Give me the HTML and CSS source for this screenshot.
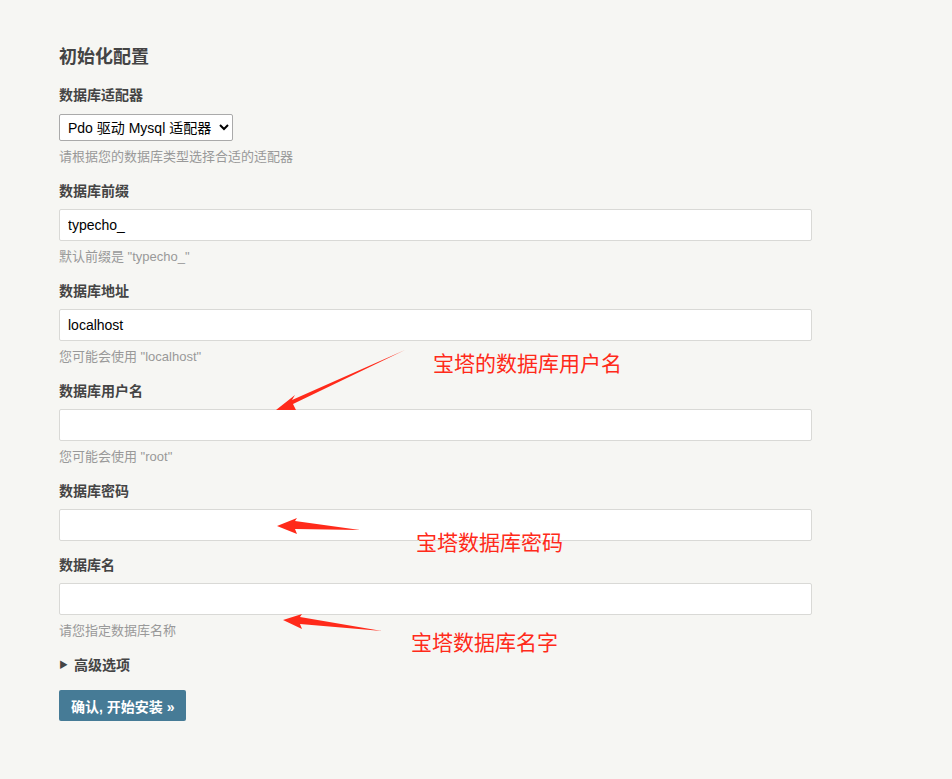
FILE: index.html
```html
<!DOCTYPE html>
<html lang="zh-CN">
<head>
<meta charset="utf-8">
<title>初始化配置</title>
<link rel="stylesheet" href="styles.css">
</head>
<body>
<div class="page">
  <h2 class="title">初始化配置</h2>
  <div class="group">
    <label class="label">数据库适配器</label>
    <select class="select"><option>Pdo 驱动 Mysql 适配器</option></select>
    <p class="desc">请根据您的数据库类型选择合适的适配器</p>
  </div>
  <div class="group">
    <label class="label">数据库前缀</label>
    <input class="input" type="text" value="typecho_">
    <p class="desc">默认前缀是 "typecho_"</p>
  </div>
  <div class="group">
    <label class="label">数据库地址</label>
    <input class="input" type="text" value="localhost">
    <p class="desc">您可能会使用 "localhost"</p>
  </div>
  <div class="group">
    <label class="label">数据库用户名</label>
    <input class="input" type="text" value="">
    <p class="desc">您可能会使用 "root"</p>
  </div>
  <div class="group">
    <label class="label">数据库密码</label>
    <input class="input" type="password" value="">
  </div>
  <div class="group">
    <label class="label">数据库名</label>
    <input class="input" type="text" value="">
    <p class="desc">请您指定数据库名称</p>
  </div>
  <div class="advanced"><span class="tri">&#9654;</span>高级选项</div>
  <button class="btn" type="button">确认, 开始安装 &raquo;</button>

  <svg class="arrows" width="952" height="779" viewBox="0 0 952 779">
    <polygon points="405,350 292,400 295,395 276,410 296,410 293,404" fill="#ff2a1a"/>
    <polygon points="360,530 295,521 297,518 277,526 297,534 295,529" fill="#ff2a1a"/>
    <polygon points="382,631 300,617 302,614 283,620 302,629 300,624" fill="#ff2a1a"/>
  </svg>
  <span class="note note1">宝塔的数据库用户名</span>
  <span class="note note2">宝塔数据库密码</span>
  <span class="note note3">宝塔数据库名字</span>
</div>
</body>
</html>
```

FILE: styles.css
```css
html, body {
  margin: 0;
  padding: 0;
  background: #f6f6f3;
}
.page {
  position: relative;
  width: 952px;
  height: 779px;
  box-sizing: border-box;
  padding: 44px 0 0 59px;
  font-family: "Liberation Sans", "Noto Sans CJK SC", sans-serif;
  color: #444;
  overflow: hidden;
}
.title {
  margin: 0 0 15px;
  font-size: 18px;
  line-height: 26px;
  font-weight: bold;
  color: #444;
}
.group {
  display: flex;
  flex-direction: column;
  align-items: flex-start;
  margin-bottom: 14px;
}
.label {
  display: block;
  font-size: 14px;
  line-height: 20px;
  font-weight: bold;
  color: #444;
  margin-bottom: 8px;
}
.select {
  height: 27px;
  width: 174px;
  font-family: "Liberation Sans", "Noto Sans CJK SC", sans-serif;
  font-size: 14px;
  color: #000;
  background: #fff;
  border: 1px solid #aaa;
  border-radius: 2px;
  padding: 0 4px;
  margin: 1px 0 0;
}
.input {
  box-sizing: border-box;
  width: 753px;
  height: 32px;
  margin: 0;
  padding: 0 8px;
  background: #fff;
  border: 1px solid #d9d9d6;
  border-radius: 2px;
  font-family: "Liberation Sans", "Noto Sans CJK SC", sans-serif;
  font-size: 14px;
  color: #000;
  outline: none;
}
.desc {
  margin: 6px 0 0;
  font-size: 13px;
  line-height: 20px;
  color: #999;
}
.advanced {
  display: flex;
  align-items: center;
  font-size: 14px;
  line-height: 20px;
  font-weight: bold;
  color: #444;
  margin: 0 0 15px;
}
.tri {
  font-size: 9px;
  margin-right: 6px;
  color: #444;
}
.btn {
  display: block;
  height: 31px;
  padding: 0 12px;
  background: #467b96;
  color: #fff;
  border: none;
  border-radius: 2px;
  font-family: "Liberation Sans", "Noto Sans CJK SC", sans-serif;
  font-size: 14px;
  font-weight: bold;
  cursor: pointer;
}
.arrows {
  position: absolute;
  left: 0;
  top: 0;
  pointer-events: none;
}
.note {
  position: absolute;
  font-family: "Noto Sans CJK SC", sans-serif;
  font-size: 21px;
  line-height: 24px;
  color: #ff2a1a;
  white-space: nowrap;
}
.note1 { left: 433px; top: 350px; }
.note2 { left: 416px; top: 529px; }
.note3 { left: 411px; top: 629px; }
```
